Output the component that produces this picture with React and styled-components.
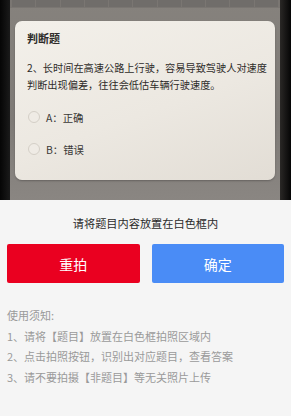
import React from "react";
import styled, { createGlobalStyle } from "styled-components";

const Global = createGlobalStyle`
  html, body { margin: 0; padding: 0; background: #f5f5f5; }
  body { font-family: "Noto Sans CJK SC", "Noto Sans", sans-serif; }
  * { box-sizing: border-box; }
`;

const Page = styled.div`
  width: 291px;
  height: 416px;
  display: flex;
  flex-direction: column;
  background: #f5f5f5;
  overflow: hidden;
`;

const Photo = styled.div`
  height: 200px;
  display: flex;
  background: #0c0c0c;
`;

const Edge = styled.div`
  width: ${(p) => p.$w}px;
  background: linear-gradient(90deg, ${(p) => p.$from}, ${(p) => p.$to});
`;

const Scene = styled.div`
  flex: 1;
  display: flex;
  flex-direction: column;
  background: linear-gradient(180deg, #86827d 0%, #7e7a76 60%, #8a8682 100%);
`;

const KeyStrip = styled.div`
  height: 8px;
  display: flex;
  gap: 1px;
  background: #7a7672;
  padding: 0 2px 1px;
`;

const Key = styled.div`
  flex: 1;
  background: #706d6a;
`;

const Card = styled.div`
  margin: 13px 5px 0;
  height: 159px;
  border-radius: 7px;
  background: linear-gradient(160deg, #f3f0ea 0%, #ece8e1 55%, #e2ddd5 100%);
  padding: 10px 8px 0 12px;
  color: #2e2c2a;
  box-shadow: 0 1px 2px rgba(0, 0, 0, 0.25);
`;

const CardTitle = styled.div`
  font-size: 11px;
  font-weight: 700;
  line-height: 14px;
`;

const Question = styled.div`
  margin-top: 14px;
  font-size: 10.2px;
  line-height: 17px;
  letter-spacing: 0;
`;

const Option = styled.div`
  display: flex;
  align-items: center;
  gap: 6px;
  height: 14px;
  margin-top: ${(p) => p.$top}px;
  padding-left: 1px;
  font-size: 10.4px;
  color: #3a3836;
`;

const Radio = styled.span`
  width: 12px;
  height: 12px;
  border-radius: 50%;
  border: 1px solid #d4cfc7;
  background: #efebe5;
`;

const Panel = styled.div`
  flex: 1;
  display: flex;
  flex-direction: column;
  padding: 0 7px;
`;

const Hint = styled.div`
  margin-top: 15px;
  text-align: center;
  font-size: 11.2px;
  line-height: 16px;
  color: #2a2a2a;
`;

const Buttons = styled.div`
  margin-top: 13px;
  display: grid;
  grid-template-columns: 1fr 1fr;
  gap: 12px;
`;

const Button = styled.div`
  height: 39px;
  border-radius: 2px;
  background: ${(p) => p.$bg};
  color: #fff;
  display: flex;
  align-items: center;
  justify-content: center;
  font-size: 14px;
`;

const Notes = styled.div`
  margin-top: 22px;
  color: #9a9a9a;
  font-size: 11px;
  line-height: 20.5px;
`;

export default function App() {
  return (
    <Page>
      <Global />
      <Photo>
        <Edge $w={10} $from="#050505" $to="#1a1a1a" />
        <Scene>
          <KeyStrip>
            {Array.from({ length: 11 }).map((_, i) => (
              <Key key={i} />
            ))}
          </KeyStrip>
          <Card>
            <CardTitle>判断题</CardTitle>
            <Question>
              2、长时间在高速公路上行驶，容易导致驾驶人对速度判断出现偏差，往往会低估车辆行驶速度。
            </Question>
            <Option $top={17}>
              <Radio />A：正确
            </Option>
            <Option $top={18}>
              <Radio />B：错误
            </Option>
          </Card>
        </Scene>
        <Edge $w={11} $from="#2a2826" $to="#050505" />
      </Photo>
      <Panel>
        <Hint>请将题目内容放置在白色框内</Hint>
        <Buttons>
          <Button $bg="#ea0020">重拍</Button>
          <Button $bg="#4a8cf6">确定</Button>
        </Buttons>
        <Notes>
          <div>使用须知:</div>
          <div>1、请将【题目】放置在白色框拍照区域内</div>
          <div>2、点击拍照按钮，识别出对应题目，查看答案</div>
          <div>3、请不要拍摄【非题目】等无关照片上传</div>
        </Notes>
      </Panel>
    </Page>
  );
}
